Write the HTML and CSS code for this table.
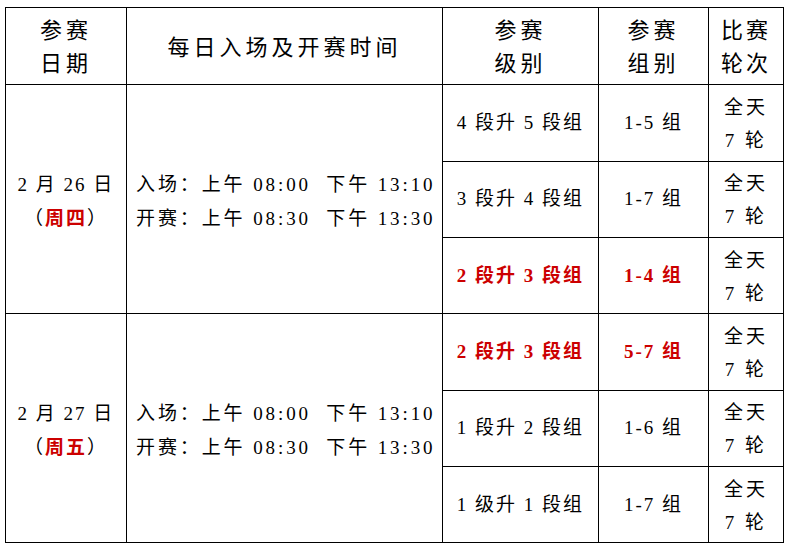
FILE: index.html
```html
<!DOCTYPE html>
<html>
<head>
<meta charset="utf-8">
<title>赛程安排</title>
<link rel="stylesheet" href="styles.css">
</head>
<body>
<table class="schedule">
  <colgroup>
    <col class="c-date">
    <col class="c-time">
    <col class="c-level">
    <col class="c-group">
    <col class="c-round">
  </colgroup>
  <thead>
    <tr class="head-row">
      <th>参赛<br>日期</th>
      <th>每日入场及开赛时间</th>
      <th>参赛<br>级别</th>
      <th>参赛<br>组别</th>
      <th class="narrow">比赛<br>轮次</th>
    </tr>
  </thead>
  <tbody>
    <tr class="body-row">
      <td rowspan="3" class="date">2 月 26 日<br>（<span class="red">周四</span>）</td>
      <td rowspan="3" class="time">入场：上午 08:00&nbsp; 下午 13:10<br>开赛：上午 08:30&nbsp; 下午 13:30</td>
      <td>4 段升 5 段组</td>
      <td>1-5 组</td>
      <td class="round">全天<br>7 轮</td>
    </tr>
    <tr class="body-row">
      <td>3 段升 4 段组</td>
      <td>1-7 组</td>
      <td class="round">全天<br>7 轮</td>
    </tr>
    <tr class="body-row">
      <td class="red">2 段升 3 段组</td>
      <td class="red">1-4 组</td>
      <td class="round">全天<br>7 轮</td>
    </tr>
    <tr class="body-row">
      <td rowspan="3" class="date">2 月 27 日<br>（<span class="red">周五</span>）</td>
      <td rowspan="3" class="time">入场：上午 08:00&nbsp; 下午 13:10<br>开赛：上午 08:30&nbsp; 下午 13:30</td>
      <td class="red">2 段升 3 段组</td>
      <td class="red">5-7 组</td>
      <td class="round">全天<br>7 轮</td>
    </tr>
    <tr class="body-row">
      <td>1 段升 2 段组</td>
      <td>1-6 组</td>
      <td class="round">全天<br>7 轮</td>
    </tr>
    <tr class="body-row">
      <td>1 级升 1 段组</td>
      <td>1-7 组</td>
      <td class="round">全天<br>7 轮</td>
    </tr>
  </tbody>
</table>
</body>
</html>
```

FILE: styles.css
```css
html, body {
  background: #ffffff;
}
body {
  margin: 0;
  padding: 7px 0 0 5px;
  font-family: "Liberation Serif", "DejaVu Serif", "Noto Sans CJK SC", serif;
  color: #000000;
}
.schedule {
  border-collapse: collapse;
  table-layout: fixed;
  width: 778px;
  font-family: "Liberation Serif", "DejaVu Serif", "Noto Sans CJK SC", serif;
}
.c-date { width: 121px; }
.c-time { width: 316px; }
.c-level { width: 156px; }
.c-group { width: 110px; }
.c-round { width: 75px; }

.head-row { height: 77.4px; }
.body-row { height: 76.3px; }

.schedule th,
.schedule td {
  border: 1.5px solid #000000;
  padding: 0;
  text-align: center;
  vertical-align: middle;
}
.schedule th {
  font-weight: 400;
  font-size: 22px;
  line-height: 33px;
  letter-spacing: 4px;
  padding-top: 2px;
}
.schedule td {
  font-weight: 400;
  font-size: 19px;
  line-height: 34px;
  letter-spacing: 2px;
}
.schedule th.narrow {
  letter-spacing: 3px;
}
.schedule td.date {
  padding-top: 6px;
}
.schedule td.time {
  text-align: left;
  padding-left: 9px;
  padding-top: 6px;
  letter-spacing: 2.9px;
}
.schedule td.round {
  line-height: 33px;
  letter-spacing: 3px;
  padding-top: 2px;
}
.red {
  color: #cc0000;
  font-weight: 700;
}
.schedule td.red {
  font-weight: 700;
}
```
